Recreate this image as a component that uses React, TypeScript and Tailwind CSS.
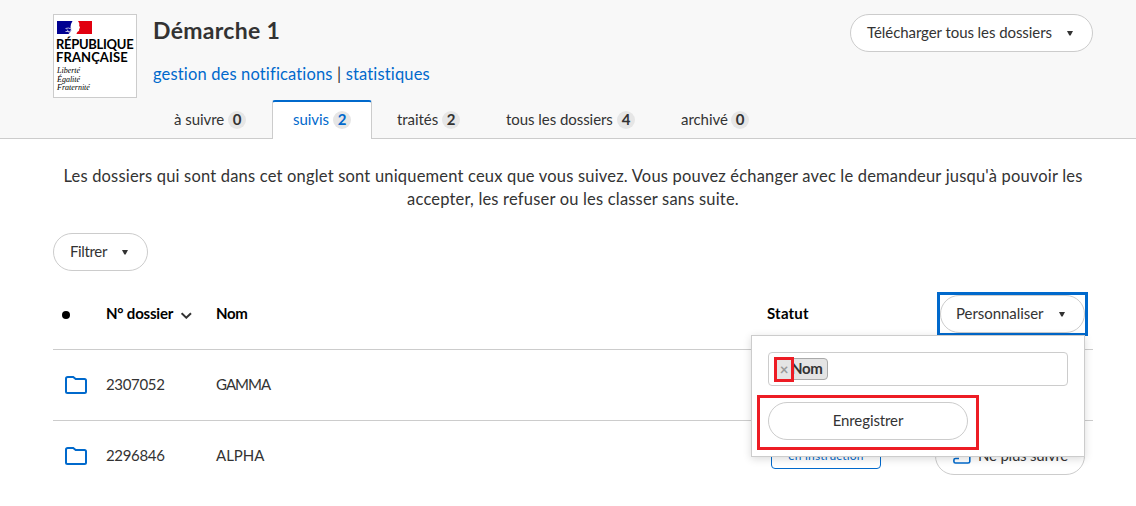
import type { ReactNode } from "react";

function Caret() {
  return (
    <svg className="h-[6px] w-[6px] shrink-0" viewBox="0 0 6 6" fill="#333">
      <path d="M0 1h6L3.600 5.500H2.400z" />
    </svg>
  );
}

function Marianne() {
  return (
    <svg className="block h-[13px] w-[35px]" viewBox="0 0 35 13">
      <path fill="#fff" d="M0 0h35v13H0z" />
      <path fill="#000091" d="M0 0h15.500l-1.500 3-.5 3 .5 3-1 2.500-1.500 1.500H0z" />
      <path fill="#e1000f" d="M21 0h14v13H19.500c.2-2 2-2.500 2.400-3.200.7-1-.2-1.500.6-2.100-.1-.8.8-.9.4-1.600-.6-.9-.9-1.500-.6-2.600.2-1-.5-2.300-1.300-3.500z" />
      <path stroke="#b9b9e0" strokeWidth="1" fill="none" d="M8.500 7.500l3-.5 3 1M8.500 10.500h4l2-1M10 8.500l2.500 3.500" />
    </svg>
  );
}

function Folder() {
  return (
    <svg className="h-[18px] w-[22px]" viewBox="0 0 22 18" fill="none" stroke="#0069cc" strokeWidth="2">
      <path d="M2.800 1H8.200L10.700 3H19.500Q21 3 21 4.500V15.500Q21 17 19.500 17H2.500Q1 17 1 15.500V2.800Q1 1 2.800 1Z" />
    </svg>
  );
}

function Unfollow() {
  return (
    <svg className="h-[16px] w-[18px]" viewBox="0 0 18 16" fill="none" stroke="#0069cc" strokeWidth="1.6">
      <path d="M6 10.500H2.500Q.9 10.500.9 12V13.500Q.9 15 2.500 15H15Q16.800 15 16.800 13.500V3Q16.800 1 15 1H5" />
    </svg>
  );
}

function Tab({ children, count, active, className }: { children: ReactNode; count: number; active?: boolean; className: string }) {
  const state = active
    ? "border-x border-t-2 border-x-[#ccc] border-t-[#0069cc] bg-white text-[#0069cc] rounded-t-[3px]"
    : "border-x border-t-2 border-transparent text-[#333]";
  return (
    <div className={`flex h-[39px] shrink-0 items-center justify-between px-[20px] pb-px text-[15px] ${state} ${className}`}>
      <span className="-mt-[2px] whitespace-nowrap tracking-[-0.05px]">{children}</span>
      <span className="flex h-[18px] w-[18px] shrink-0 items-center justify-center rounded-full bg-[#e6e6e6] pb-px font-bold">{count}</span>
    </div>
  );
}

function Row({ id, name, nameClass }: { id: string; name: string; nameClass: string }) {
  return (
    <div className="flex h-[71px] items-center border-t border-[#ccc] text-[15px]">
      <div className="flex w-[53px] pl-[12px]"><Folder /></div>
      <div className="w-[110px] pb-[2px] tracking-[-0.33px]">{id}</div>
      <div className={`w-[555px] pb-[2px] ${nameClass}`}>{name}</div>
      <div className="flex h-[26px] w-[110px] items-center justify-center rounded-[4px] border border-[#0069cc] text-[12px] tracking-[0.2px] text-[#0069cc]">en instruction</div>
      <div className="ml-[54px] flex h-[38px] w-[150px] items-center rounded-full border border-[#ccc] bg-white pl-[17px]">
        <Unfollow />
        <span className="ml-[7px] pb-[1px] tracking-[-0.2px] whitespace-nowrap">Ne plus suivre</span>
      </div>
    </div>
  );
}

export default function App() {
  return (
    <div className="h-[506px] w-[1136px] overflow-hidden bg-white font-['Lato',sans-serif] text-[#333]">
      <header className="h-[139px] border-b border-[#ccc] bg-[#f8f8f8] pr-[43px] pl-[53px] pt-[14px]">
        <div className="flex h-[86px]">
          <div className="h-[84px] w-[84px] shrink-0 border border-[#ccc] bg-white pl-[3px] pt-[6px] text-black">
            <Marianne />
            <div className="-ml-px mt-[4px] text-[13px] leading-[13px] font-bold whitespace-nowrap">
              <div className="tracking-[-0.3px]">RÉPUBLIQUE</div>
              <div className="tracking-[0.1px]">FRANÇAISE</div>
            </div>
            <div className="mt-[3px] font-['Liberation_Serif',serif] text-[8px] leading-[8.500px] font-normal italic">
              <div>Liberté</div>
              <div>Égalité</div>
              <div>Fraternité</div>
            </div>
          </div>
          <div className="ml-[16px]">
            <h1 className="h-[33px] text-[23px] leading-[32px] font-bold tracking-[0.3px] whitespace-nowrap">Démarche 1</h1>
            <p className="mt-[15px] text-[16.5px] leading-[24px] tracking-[0.15px] whitespace-nowrap">
              <span className="text-[#0069cc]">gestion des notifications</span> | <span className="text-[#0069cc]">statistiques</span>
            </p>
          </div>
          <button className="ml-auto flex h-[38px] w-[243px] items-center justify-between rounded-full border border-[#ccc] bg-white pr-[19px] pl-[16px] text-[15px]">
            <span className="pb-[2px] tracking-[-0.07px]">Télécharger tous les dossiers</span>
            <Caret />
          </button>
        </div>
        <nav className="flex pl-[100px]">
          <Tab count={0} className="mr-[5px] w-[114px]">à suivre</Tab>
          <Tab count={2} active className="mr-[4px] w-[100px]">suivis</Tab>
          <Tab count={2} className="mr-[4px] w-[105px]">traités</Tab>
          <Tab count={4} className="mr-[4px] w-[171px]">tous les dossiers</Tab>
          <Tab count={0} className="w-[110px]">archivé</Tab>
        </nav>
      </header>

      <main className="pr-[43px] pl-[53px]">
        <p className="pt-[26px] text-center text-[16.5px] leading-[23px] tracking-[0.19px]">
          <span className="block whitespace-nowrap">Les dossiers qui sont dans cet onglet sont uniquement ceux que vous suivez. Vous pouvez échanger avec le demandeur jusqu'à pouvoir les</span>
          <span className="block whitespace-nowrap">accepter, les refuser ou les classer sans suite.</span>
        </p>
        <button className="mt-[22px] flex h-[38px] w-[95px] items-center justify-between rounded-full border border-[#ccc] bg-white pr-[19px] pl-[16px] text-[15px]">
          <span className="pb-[2px] tracking-[-0.35px]">Filtrer</span>
          <Caret />
        </button>

        <div className="mt-[21px] flex h-[57px] text-[15px] font-bold text-black">
          <div className="w-[53px] pt-[19px] pl-[9px]"><div className="h-[8px] w-[8px] rounded-full bg-black" /></div>
          <div className="flex w-[110px] pt-[10px] leading-[22px]">
            <span className="w-[75px] tracking-[-0.2px] whitespace-nowrap">N° dossier</span>
            <svg className="mt-[10px] h-[7px] w-[11px]" viewBox="0 0 11 7" fill="none" stroke="#333" strokeWidth="2"><path d="M.6 1.200l4.700 4.500 4.700-4.500" /></svg>
          </div>
          <div className="w-[551px] pt-[10px] leading-[22px] tracking-[-0.3px]">Nom</div>
          <div className="w-[170px] pt-[10px] leading-[22px] tracking-[0.2px]">Statut</div>
          <div className="relative h-[44px] w-[151px] border-3 border-[#0069cc] font-normal text-[#333]">
            <button className="flex h-[38px] w-[145px] items-center justify-between rounded-full border border-[#ccc] bg-white pr-[19px] pl-[15px]">
              <span className="pb-[2px] tracking-[-0.05px]">Personnaliser</span>
              <Caret />
            </button>
            <div className="absolute top-[40px] right-0 z-10 h-[122px] w-[334px] border border-[#ccc] bg-white px-[16px] pt-[16px] shadow-[0_2px_8px_rgba(0,0,0,0.15)]">
              <div className="h-[34px] w-[300px] rounded-[4px] border border-[#ccc] pt-[5px] pl-[5px]">
                <div className="relative flex h-[22px] w-[54px] items-center rounded-[4px] border border-[#aaa] bg-[#e4e4e4] pb-[2px] pl-[16px] font-bold tracking-[-0.4px]">
                  Nom
                  <div className="absolute top-[-2px] left-[-1px] flex h-[25px] w-[20px] items-center justify-center border-3 border-[#ed1c24] bg-[#e4e4e4] pb-px text-[15px] text-[#999]">×</div>
                </div>
              </div>
              <div className="mt-[9px] ml-[-11px] h-[55px] w-[222px] border-3 border-[#ed1c24] pt-[4px] pl-[8px]">
                <button className="h-[38px] w-[200px] rounded-full border border-[#ccc] bg-white pb-[2px] text-[15px] tracking-[-0.1px]">Enregistrer</button>
              </div>
            </div>
          </div>
        </div>
        <Row id="2307052" name="GAMMA" nameClass="tracking-[-0.95px]" />
        <Row id="2296846" name="ALPHA" nameClass="tracking-[0px]" />
      </main>
    </div>
  );
}
